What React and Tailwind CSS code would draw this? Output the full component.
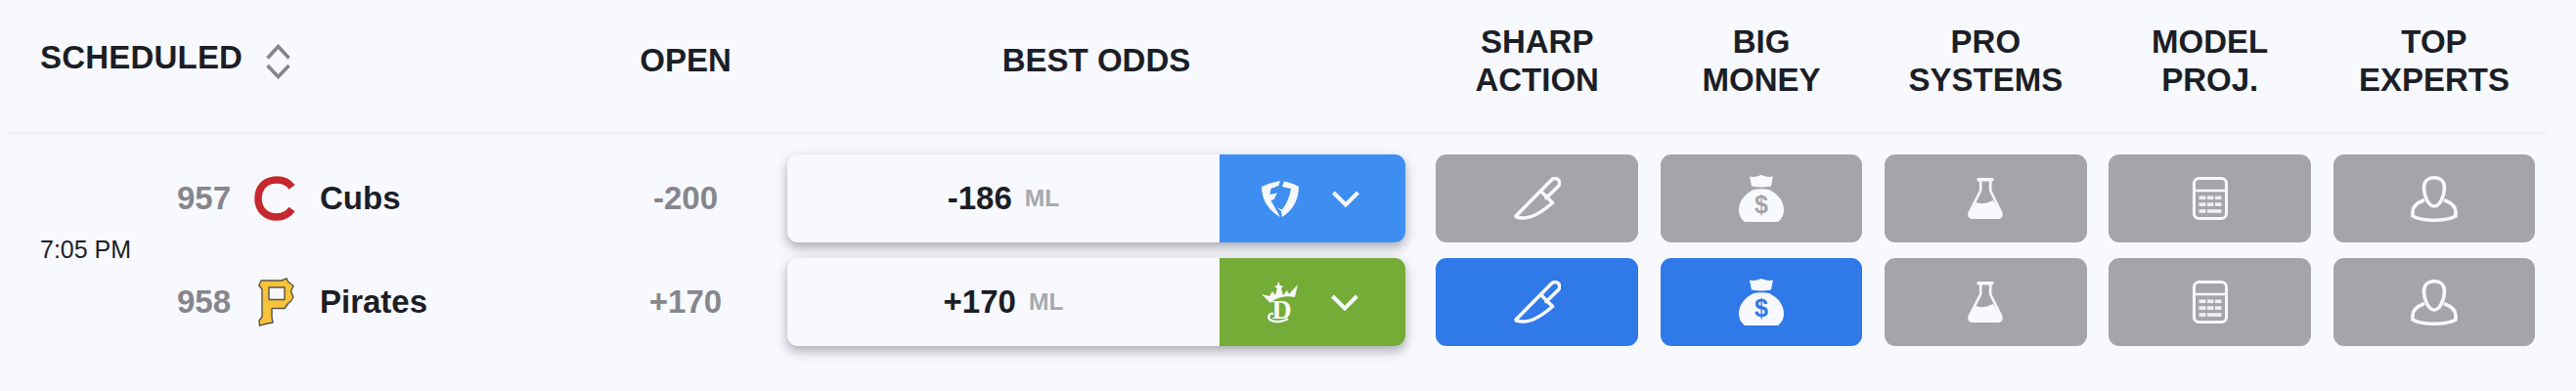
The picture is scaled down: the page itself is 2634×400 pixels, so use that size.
import React from "react";

const Knife = () => (
  <svg width="48" height="44" viewBox="0 0 48 44" fill="none" stroke="#f7f9fe" strokeWidth="3.6" strokeLinejoin="round" strokeLinecap="round">
    <path d="M2.5 39.5 L38 3.5 C40.5 1 43.5 1 45.5 3 C47.5 5 47 8 45 10 L33 21.5" />
    <path d="M27.5 14.5 L39.5 26.5 C31 34 20 41.5 10 42 C4 42 1 41 2.5 39.5" />
  </svg>
);

const Bag = ({ dollar }) => (
  <svg width="46" height="48" viewBox="0 0 46 48" className="overflow-visible">
    <path d="M11 1.5 C15 2.5 18 2 23 0 C28 2 31 2.5 35 1.5 L33 11.5 C26 12.8 20 12.8 13 11.5 Z" fill="#f7f9fe" />
    <path d="M15 15 C20 14 26 14 31 15 C39 19 46 26 46 36 C46 41 44 45 40 48 L6 48 C2 45 0 41 0 36 C0 26 7 19 15 15 Z" fill="#f7f9fe" />
    <text x="23" y="39" textAnchor="middle" fontSize="25" fontWeight="700" fontFamily="'Liberation Sans',sans-serif" fill={dollar}>$</text>
  </svg>
);

const Flask = () => (
  <svg width="36" height="42" viewBox="0 0 36 42" fill="none">
    <path d="M11 1.7 H25" stroke="#f7f9fe" strokeWidth="3.4" strokeLinecap="round" />
    <path d="M13.2 3 V13 L2 35 C0.8 38.5 2 40.8 5 40.8 H31 C34 40.8 35.2 38.5 34 35 L23.2 13 V3" stroke="#f7f9fe" strokeWidth="2.6" />
    <path d="M8.5 25 C13 27 19 26.5 26 23 L34 36 C35 39 34 41 31 41 H5 C2 41 1 39 2 36 Z" fill="#f7f9fe" />
  </svg>
);

const Calc = () => (
  <svg width="36" height="44" viewBox="0 0 36 44" fill="none">
    <rect x="1.5" y="1.5" width="33" height="41" rx="5" stroke="#f7f9fe" strokeWidth="3" />
    <path d="M1.5 14 H34.5" stroke="#f7f9fe" strokeWidth="2.6" />
    <g fill="#f0f1f6">
      <rect x="6.5" y="19.5" width="7" height="3.6" />
      <rect x="15" y="19.5" width="6.5" height="3.6" />
      <rect x="23" y="19.5" width="6.5" height="3.6" />
      <rect x="6.5" y="26.3" width="7" height="3.6" />
      <rect x="15" y="26.3" width="6.5" height="3.6" />
      <rect x="23" y="26.3" width="6.5" height="3.6" />
      <rect x="6.5" y="33.2" width="7" height="3.6" />
      <rect x="15" y="33.2" width="14.5" height="3.6" />
    </g>
  </svg>
);

const Person = () => (
  <svg width="48" height="47" viewBox="0 0 48 47" fill="none" stroke="#f7f9fe" strokeWidth="3.6">
    <path d="M24 1.8 C30.5 1.8 34.5 6 34.5 12 C34.5 20 30 31 24 31 C18 31 13.5 20 13.5 12 C13.5 6 17.5 1.8 24 1.8 Z" />
    <path d="M14 24.5 C6.5 27.5 2 31 2 36.5 V41 C7 44 15 45.2 24 45.2 C33 45.2 41 44 46 41 V36.5 C46 31 41.5 27.5 34 24.5" />
  </svg>
);

const Chevron = () => (
  <svg width="28" height="17" viewBox="0 0 28 17" fill="none" stroke="#f7f9fe" strokeWidth="4">
    <path d="M1.5 2 L14 14.5 L26.5 2" />
  </svg>
);

const Sort = () => (
  <svg width="25" height="36" viewBox="0 0 25 36" fill="none" stroke="#85858b" strokeWidth="3.6" className="mt-[8px]">
    <path d="M1.5 14.5 L12.5 2.5 L23.5 14.5" />
    <path d="M1.5 22 L12.5 33.5 L23.5 22" />
  </svg>
);

const CubsLogo = () => (
  <svg width="42" height="46" viewBox="0 0 42 46" fill="none">
    <path d="M38.5 11.5 C35 6.5 30 4 23 4 C11 4 4 12 4 23 C4 34 11 42 23 42 C30 42 35 39 38.5 34" stroke="#ffffff" strokeWidth="9.5" />
    <path d="M38.5 11.5 C35 6.5 30 4 23 4 C11 4 4 12 4 23 C4 34 11 42 23 42 C30 42 35 39 38.5 34" stroke="#c6282f" strokeWidth="7.6" />
  </svg>
);

const PiratesLogo = () => (
  <svg width="37" height="50" viewBox="0 0 37 50" className="ml-[4px]">
    <path
      fillRule="evenodd"
      d="M0.8 8 L3 3 H24 L29 0.8 L30.5 4 L36 8.5 L33.5 14 L36 20 L33.5 24 L31 26 L27 31.5 H14 V41 L15 46 L9 47 L1.5 49.2 L1 44 L4 40 V12 Z M11 10 V22.5 H27 V10 Z"
      fill="#f8c239"
      stroke="#55534e"
      strokeWidth="1.4"
      strokeLinejoin="round"
    />
  </svg>
);

const FanDuelLogo = () => (
  <svg width="38" height="37" viewBox="0 0 38 37" fill="#f7f9fe">
    <path d="M0 6 Q8 2 19 0 L17.5 5 L9.5 8 L8.5 14 L16 12.5 L12.5 19 L9.5 20 L14 28 L19 37 C8 31 0 20 0 6 Z" />
    <path d="M23 0.5 Q32 2 38 6 C38 20 31 31 21 37 L20 31 L16 27.5 L21 29.5 C26 23 29 15 30 8 L21 6 Z" />
  </svg>
);

const DraftKingsLogo = () => (
  <svg width="37" height="42" viewBox="0 0 37 42" className="overflow-visible">
    <path
      d="M0 13 L8 15 L11 10 L14 14 L16 7 L13 5 L16 4 L17 0 L19 4 L22 5 L20 7 L22 14 L26 9 L28 13 L37 3 L34 16 C26 14 14 16 9 22 Z"
      fill="#f7f9fe"
    />
    <text x="20.5" y="38" textAnchor="middle" fontSize="28" fontWeight="700" fontFamily="'Liberation Serif',serif" fill="#f7f9fe">D</text>
    <path d="M12 33 C7 32 6 37 9 39.5 C13 42 22 41.5 27 38" fill="none" stroke="#f7f9fe" strokeWidth="2.4" />
  </svg>
);

function Signal({ active, children }) {
  return (
    <div className="w-[229.33px] px-[11.2px] h-full">
      <div className={`h-full rounded-[11px] flex items-center justify-center ${active ? "bg-[#2f79e8]" : "bg-[#a5a4a9]"}`}>
        {children}
      </div>
    </div>
  );
}

function Row({ num, logo, team, open, odds, book, bookBg, sharp, money }) {
  return (
    <div className="flex h-[90px] items-center">
      <div className="w-[436px] flex items-center h-full">
        <span className="w-[79px] text-[33px] font-bold text-[#86868c]">{num}</span>
        <span className="w-[67px] flex items-center">{logo}</span>
        <span className="text-[33px] font-bold text-[#1c1e26]">{team}</span>
      </div>
      <div className="w-[168px] text-center text-[33px] font-bold text-[#86868c]">{open}</div>
      <div className="w-[672px] px-[20px] h-full">
        <div className="flex h-full rounded-[11px] bg-[#f7f9fe] shadow-[0_5px_12px_rgba(40,40,50,0.38)]">
          <div className="flex-1 flex items-center justify-center gap-[13px]">
            <span className="text-[33px] font-bold text-[#1c1e26]">{odds}</span>
            <span className="text-[24.6px] font-bold text-[#a8a8ad]">ML</span>
          </div>
          <div className={`w-[190px] rounded-r-[11px] flex items-center pl-[43px] gap-[34px] ${bookBg}`}>
            {book}
            <Chevron />
          </div>
        </div>
      </div>
      <Signal active={sharp}><Knife /></Signal>
      <Signal active={money}><Bag dollar={money ? "#2f79e8" : "#a5a4a9"} /></Signal>
      <Signal><Flask /></Signal>
      <Signal><Calc /></Signal>
      <Signal><Person /></Signal>
    </div>
  );
}

function HeadCell({ children }) {
  return (
    <div className="w-[229.33px] text-center text-[33px] leading-[39px] font-bold">{children}</div>
  );
}

export default function App() {
  return (
    <div className="w-[2634px] h-[400px] bg-[#f7f9fe] font-['Liberation_Sans',sans-serif] text-[#1c1e26]">
      <div className="ml-[7px] w-[2597px] h-[138px] border-b-[3px] border-[#f0f1f5] flex items-center pb-[11px]">
        <div className="w-[610px] pl-[34px] flex items-center gap-[24px] text-[33px] font-bold tracking-[0.2px] -mt-[6px]">
          <span>SCHEDULED</span>
          <Sort />
        </div>
        <div className="w-[168px] text-center text-[33px] font-bold">OPEN</div>
        <div className="w-[672px] text-center text-[33px] font-bold">BEST ODDS</div>
        <HeadCell>SHARP<br />ACTION</HeadCell>
        <HeadCell>BIG<br />MONEY</HeadCell>
        <HeadCell>PRO<br />SYSTEMS</HeadCell>
        <HeadCell>MODEL<br />PROJ.</HeadCell>
        <HeadCell>TOP<br />EXPERTS</HeadCell>
      </div>
      <div className="flex ml-[7px] pt-[20px]">
        <div className="w-[174px] pl-[34px] flex items-center text-[25px] text-[#1c1e26]">7:05 PM</div>
        <div className="flex flex-col gap-[16px]">
          <Row num="957" logo={<CubsLogo />} team="Cubs" open="-200" odds="-186" book={<FanDuelLogo />} bookBg="bg-[#3e8ef2]" />
          <Row num="958" logo={<PiratesLogo />} team="Pirates" open="+170" odds="+170" book={<DraftKingsLogo />} bookBg="bg-[#73ac37]" sharp money />
        </div>
      </div>
    </div>
  );
}
